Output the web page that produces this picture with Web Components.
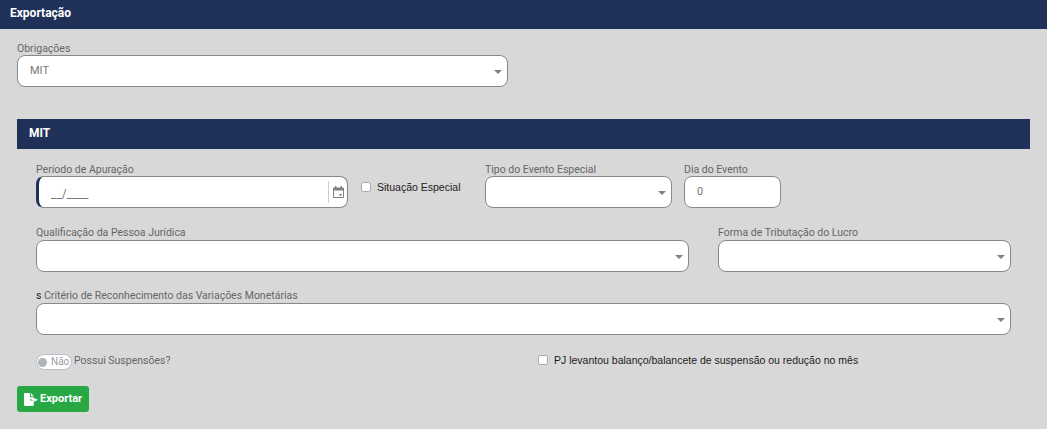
<!DOCTYPE html>
<html lang="pt-BR"><head><meta charset="utf-8"><title>Exportação</title>
<style>
html,body{margin:0;padding:0;background:#d8d8d8;font-family:Roboto,"Liberation Sans",sans-serif}
body{width:1047px;height:429px;overflow:hidden}
main{display:block;padding:0 17px}
.row{display:flex;align-items:flex-start}
.form{padding:0 0 0 19px;width:975px}
</style></head><body>
<template id="t-bar"><style>
:host{display:flex;align-items:center;box-sizing:border-box;background:#1f3158;color:#fff;font:700 12px/14px Roboto,sans-serif}
</style><slot></slot></template>
<template id="t-field"><style>
:host{display:block;flex:none}
label{display:block;height:var(--lh,14px);font:400 10.5px/var(--lh,14px) Roboto,sans-serif;color:#666;white-space:nowrap}
label b{font-weight:400;color:#222}
.box{box-sizing:border-box;height:32px;background:#fff;border:1px solid #888;border-radius:8px;display:flex;align-items:center;padding-left:12px;font:400 11px/14px Roboto,sans-serif;color:#777;position:relative;overflow:hidden}
:host([accent]) .box{border-left:3px solid #1f3158;padding-left:12px}
.caret{position:absolute;right:5px;top:14px;width:0;height:0;border:4px solid transparent;border-top:4px solid #808080;border-bottom:0}
.v{flex:1}
</style><label></label><div class="box"><span class="v"><slot></slot></span><slot name="end"></slot><i class="caret"></i></div></template>
<template id="t-check"><style>
:host{display:inline-flex;align-items:center;font:400 10.5px/14px "Liberation Sans",sans-serif;color:#1c1c1c;white-space:nowrap}
i{box-sizing:border-box;display:block;width:10px;height:10px;background:#fff;border:1px solid #a4a9b0;border-radius:2.5px;margin-right:var(--cg,6px)}
</style><i></i><slot></slot></template>
<template id="t-toggle"><style>
:host{display:inline-flex;box-sizing:border-box;width:36px;height:16px;align-items:center;background:#fff;border:1px solid #b9bdc6;border-radius:8px;font:400 10px/12px Roboto,sans-serif;color:#9aa0a8;overflow:hidden}
i{display:block;flex:none;width:9px;height:9px;margin:0 4px 0 1px;border-radius:50%;background:#aeb2bb}
</style><i></i><slot></slot></template>
<template id="t-btn"><style>
:host{display:inline-flex;box-sizing:border-box;align-items:center;gap:1px;width:72px;height:26px;padding-left:7px;background:#28a745;border-radius:3px;color:#fff;font:700 11px/14px Roboto,sans-serif}
svg{display:block;flex:none}
</style><svg width="15" height="13" viewBox="0 0 14 12"><path fill="#fff" d="M0 1a1 1 0 0 1 1-1h4.5v3.2a.6.6 0 0 0 .6.6H9.2V5.5H6v1.6h3.2V11a1 1 0 0 1-1 1H1a1 1 0 0 1-1-1zM6.4 0l2.8 2.9H6.4zM9.6 4.6 13 6.3 9.6 8V7H7V5.6h2.6z"/></svg><slot></slot></template>

<app-bar style="height:29px;padding:0 0 3px 10px">Exportação</app-bar>
<main>
  <form-field label="Obrigações" caret style="width:491px;margin-top:13px;--lh:13px">MIT</form-field>
  <app-bar style="height:30px;padding:0 0 2px 12px;margin-top:32px;width:1013px">MIT</app-bar>
  <div class="form">
    <div class="row" style="margin-top:14px;--lh:13px">
      <form-field accent label="Período de Apuração" style="width:312px"><span style="font-size:12px;position:relative;top:2px">__/____</span><cal-icon slot="end"></cal-icon></form-field>
      <check-item style="margin:17px 0 0 13px;width:124px;--cg:6px">Situação Especial</check-item>
      <form-field caret label="Tipo do Evento Especial" style="width:187px"></form-field>
      <form-field label="Dia do Evento" style="width:97px;margin-left:12px">0</form-field>
    </div>
    <div class="row" style="margin-top:18px">
      <form-field caret label="Qualificação da Pessoa Jurídica" style="width:653px"></form-field>
      <form-field caret label="Forma de Tributação do Lucro" style="width:293px;margin-left:29px"></form-field>
    </div>
    <div class="row" style="margin-top:17px;--lh:14px">
      <form-field caret style="width:975px" prefix="s" label=" Critério de Reconhecimento das Variações Monetárias"></form-field>
    </div>
    <div class="row" style="margin-top:19px;align-items:center;height:16px">
      <toggle-switch>Não</toggle-switch>
      <span style="font:400 10.5px/14px Roboto,sans-serif;color:#666;margin-left:2px;width:464px;margin-top:-2px">Possui Suspensões?</span>
      <check-item style="--cg:6px;margin-top:-4px">PJ levantou balanço/balancete de suspensão ou redução no mês</check-item>
    </div>
  </div>
  <export-button style="margin-top:16px">Exportar</export-button>
</main>
<script>
function tpl(id){return document.getElementById(id).content.cloneNode(true)}
function simple(name,id){customElements.define(name,class extends HTMLElement{constructor(){super();this.attachShadow({mode:'open'}).appendChild(tpl(id))}})}
simple('app-bar','t-bar');simple('check-item','t-check');simple('toggle-switch','t-toggle');simple('export-button','t-btn');
customElements.define('form-field',class extends HTMLElement{
  constructor(){super();this.attachShadow({mode:'open'}).appendChild(tpl('t-field'))}
  connectedCallback(){
    const l=this.shadowRoot.querySelector('label');
    if(this.hasAttribute('prefix')){const b=document.createElement('b');b.textContent=this.getAttribute('prefix');l.appendChild(b)}
    l.appendChild(document.createTextNode(this.getAttribute('label')||''));
    if(!this.hasAttribute('caret'))this.shadowRoot.querySelector('.caret').remove();
  }
});
customElements.define('cal-icon',class extends HTMLElement{
  constructor(){super();this.attachShadow({mode:'open'}).innerHTML=`<style>:host{display:flex;align-items:center;height:22px;border-left:1px solid #ccc;padding:0 3px 0 4px}svg{display:block}</style><svg width="11" height="12" viewBox="0 0 11 12"><path fill="#808080" d="M2 0h1.4v1.4h4.2V0H9v1.4h1a1 1 0 0 1 1 1V11a1 1 0 0 1-1 1H1a1 1 0 0 1-1-1V2.4a1 1 0 0 1 1-1h1zM1 4.4V11h9V4.4z"/><rect x="6.6" y="7.8" width="2" height="2" fill="#808080"/></svg>`}
});
</script>
</body></html>
